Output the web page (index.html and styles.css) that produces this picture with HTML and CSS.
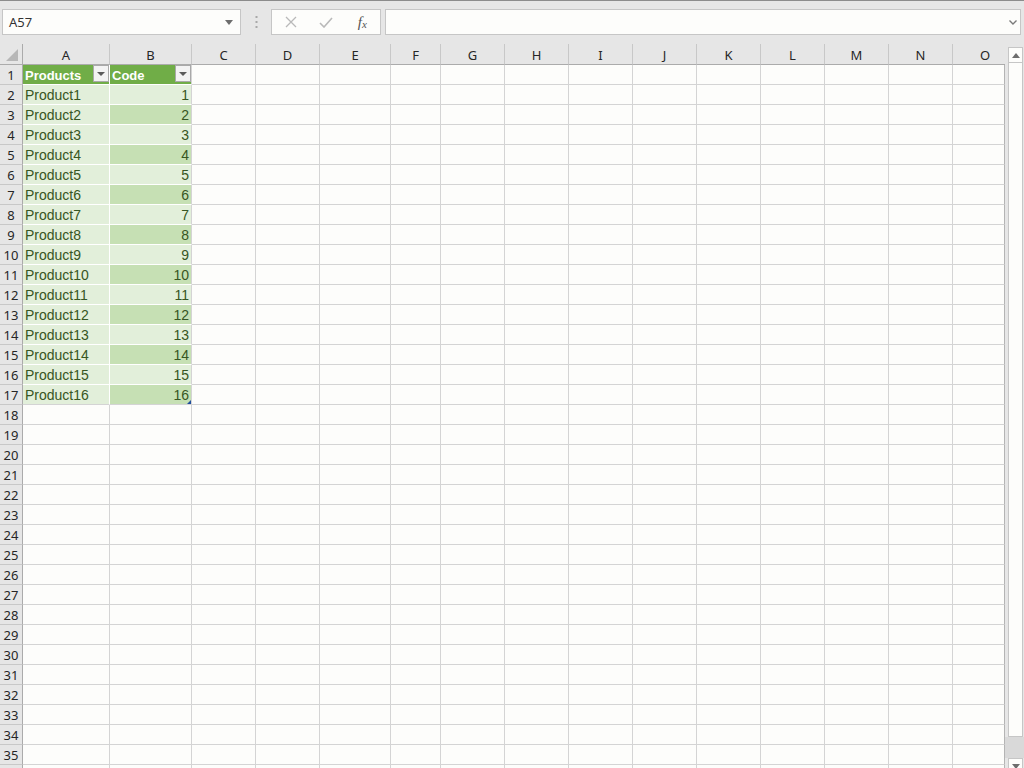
FILE: index.html
```html
<!DOCTYPE html>
<html>
<head>
  <title>Book1 - Excel</title>
  <link rel="stylesheet" href="styles.css">
</head>
<body>

  <!-- Formula bar -->
  <div class="formula-bar">
    <div class="name-box">
      <span>A57</span>
      <svg class="name-arrow" width="8" height="5" viewBox="0 0 8 5"><path d="M0 0 L8 0 L4 5 Z" fill="#6d6d6d"/></svg>
    </div>
    <div class="dots">
      <svg width="3" height="13" viewBox="0 0 3 13">
        <rect x="0.5" y="0" width="2" height="2" fill="#a8a8a8"/>
        <rect x="0.5" y="5" width="2" height="2" fill="#a8a8a8"/>
        <rect x="0.5" y="10" width="2" height="2" fill="#a8a8a8"/>
      </svg>
    </div>
    <div class="fx-buttons">
      <span class="fx-btn">
        <svg width="12" height="12" viewBox="0 0 12 12"><path d="M1 1 L11 11 M11 1 L1 11" stroke="#b9b9b9" stroke-width="1.3" fill="none"/></svg>
      </span>
      <span class="fx-btn">
        <svg width="14" height="11" viewBox="0 0 14 11"><path d="M1 6 L5 10 L13 1" stroke="#b9b9b9" stroke-width="1.6" fill="none"/></svg>
      </span>
      <span class="fx-btn fx-label"><i>f</i><span class="fx-x">x</span></span>
    </div>
    <div class="formula-input">
      <svg width="8" height="5" viewBox="0 0 8 5"><path d="M0.5 0.5 L4 4 L7.5 0.5" stroke="#7a7a7a" stroke-width="1.4" fill="none"/></svg>
    </div>
  </div>

  <!-- Sheet -->
  <div class="sheet">
    <div class="grid" id="grid"></div>
    <div class="vscroll">
      <div class="vs-btn">
        <svg width="8" height="5" viewBox="0 0 8 5"><path d="M0 5 L8 5 L4 0 Z" fill="#6d6d6d"/></svg>
      </div>
      <div class="vs-thumb"></div>
      <div class="vs-track"></div>
      <div class="vs-btn">
        <svg width="8" height="5" viewBox="0 0 8 5"><path d="M0 0 L8 0 L4 5 Z" fill="#6d6d6d"/></svg>
      </div>
    </div>
  </div>

  <script>
    const cols = "ABCDEFGHIJKLMNO".split("");
    const grid = document.getElementById("grid");
    const filterBtn = '<span class="filter"><svg width="8" height="4" viewBox="0 0 8 4"><path d="M0 0 L8 0 L4 4 Z" fill="#5b5b5b"/></svg></span>';

    function addCell(cls, html) {
      const div = document.createElement("div");
      div.className = cls;
      div.innerHTML = html || "";
      grid.appendChild(div);
    }

    // column headers
    addCell("corner", '<svg width="12" height="12" viewBox="0 0 12 12"><path d="M12 0 L12 12 L0 12 Z" fill="#b7b7b7"/></svg>');
    cols.forEach(function (c, i) {
      addCell("col-head" + (i === cols.length - 1 ? " last" : ""), c);
    });

    // row 36 only peeks in at the bottom edge, its number is off screen
    for (let r = 1; r <= 36; r++) {
      addCell("row-head", r < 36 ? r : "");
      cols.forEach(function (c, i) {
        let cls = "cell";
        let html = "";
        if (r === 1 && c === "A") {
          cls += " tbl-head";
          html = "<span>Products</span>" + filterBtn;
        } else if (r === 1 && c === "B") {
          cls += " tbl-head tbl-right";
          html = "<span>Code</span>" + filterBtn;
        } else if (r <= 17 && c === "A") {
          cls += " tbl-light";
          html = "Product" + (r - 1);
        } else if (r <= 17 && c === "B") {
          cls += (r % 2 === 0 ? " tbl-light" : " tbl-dark") + " num tbl-right";
          html = r - 1;
          if (r === 17) html += '<span class="handle"></span>';
        }
        if (r === 17 && (c === "A" || c === "B")) cls += " tbl-last";
        if (i === cols.length - 1) cls += " last";
        addCell(cls, html);
      });
    }
  </script>

</body>
</html>
```

FILE: styles.css
```css
html, body {
  margin: 0;
  padding: 0;
  height: 768px;
  overflow: hidden;
  background-color: #e6e6e6;
  font-family: "Liberation Sans", Arial, sans-serif;
}

/* Formula bar */
.formula-bar {
  height: 44px;
  box-sizing: border-box;
  border-top: 1px solid #8c8c8c;
  padding: 8px 0 0 2px;
  display: flex;
  align-items: flex-start;
}

.name-box {
  width: 239px;
  height: 26px;
  box-sizing: border-box;
  border: 1px solid #c6c6c6;
  background-color: #fdfdfb;
  display: flex;
  align-items: center;
  justify-content: space-between;
  padding: 0 7px 0 6px;
  font-family: "Noto Sans", sans-serif;
  font-size: 13px;
  color: #333;
}

.dots {
  width: 30px;
  height: 26px;
  display: flex;
  align-items: center;
  justify-content: center;
}

.fx-buttons {
  width: 110px;
  height: 26px;
  box-sizing: border-box;
  border: 1px solid #c6c6c6;
  background-color: #fdfdfb;
  display: flex;
  align-items: center;
  padding-left: 1px;
}

.fx-btn {
  width: 36px;
  display: flex;
  justify-content: center;
  align-items: center;
}

.fx-label {
  font-family: "Liberation Serif", serif;
  font-size: 15px;
  color: #555;
  padding-left: 1px;
}

.fx-label i {
  font-style: italic;
}

.fx-x {
  font-style: italic;
  font-size: 11px;
  margin-top: 3px;
}

.formula-input {
  width: 636px;
  height: 26px;
  margin-left: 4px;
  box-sizing: border-box;
  border: 1px solid #c6c6c6;
  background-color: #fdfdfb;
  display: flex;
  align-items: center;
  justify-content: flex-end;
  padding-right: 3px;
}

/* Sheet */
.sheet {
  display: flex;
  height: 724px;
  overflow: hidden;
}

.grid {
  display: grid;
  grid-template-columns: 23px 87px 82px 64px 64px 71px 50px 64px 64px 64px 64px 64px 64px 64px 64px 52px;
  grid-template-rows: 21px;
  grid-auto-rows: 20px;
  width: 1005px;
  flex: none;
}

.grid > div {
  box-sizing: border-box;
  overflow: hidden;
  white-space: nowrap;
}

.corner {
  border-right: 1px solid #ababab;
  border-bottom: 1px solid #ababab;
  display: flex;
  align-items: flex-end;
  justify-content: flex-end;
  padding: 0 4px 3px 0;
}

.col-head {
  border-right: 1px solid #c8c8c8;
  border-bottom: 1px solid #ababab;
  text-align: center;
  font-family: "Noto Sans", sans-serif;
  font-size: 13px;
  line-height: 20px;
  color: #262626;
  padding-top: 1px;
}

.col-head.last {
  border-right: none;
  padding-left: 12px;
}

.row-head {
  border-right: 1px solid #ababab;
  border-bottom: 1px solid #c8c8c8;
  text-align: center;
  font-family: "Noto Sans", sans-serif;
  font-size: 13px;
  line-height: 19px;
  padding-top: 1px;
  color: #262626;
}

.cell {
  border-right: 1px solid #d4d4d4;
  border-bottom: 1px solid #d4d4d4;
  background-color: #fdfdfb;
  font-size: 14px;
  line-height: 19px;
  padding: 1px 2px 0 2px;
  color: #375623;
}

.cell.last {
  border-right-color: #b4b4b4;
}

/* Table */
.tbl-head {
  background-color: #70ad47;
  color: #ffffff;
  font-weight: bold;
  font-size: 13px;
  border-color: #ffffff;
  display: flex;
  justify-content: space-between;
  align-items: flex-start;
  padding-top: 0;
  padding-right: 0;
  line-height: 21px;
}

.tbl-light {
  background-color: #e2efda;
  border-color: #ffffff;
}

.tbl-dark {
  background-color: #c6e0b4;
  border-color: #ffffff;
}

.tbl-right {
  border-right-color: #d4d4d4;
}

.tbl-last {
  border-bottom-color: #d4d4d4;
}

.num {
  text-align: right;
  position: relative;
}

.filter {
  width: 16px;
  height: 17px;
  box-sizing: border-box;
  border: 1px solid #a9a9a9;
  background-color: #f3f3f3;
  display: flex;
  align-items: center;
  justify-content: center;
}

.handle {
  position: absolute;
  right: 0;
  bottom: 0;
  width: 0;
  height: 0;
  border-left: 4px solid transparent;
  border-bottom: 4px solid #1f4e9c;
}

/* Scrollbar */
.vscroll {
  width: 19px;
  flex: none;
  display: flex;
  flex-direction: column;
  padding-top: 3px;
}

.vs-btn {
  height: 16px;
  flex: none;
  margin: 0 1px 0 3px;
  box-sizing: border-box;
  border: 1px solid #c6c6c6;
  background-color: #fdfdfb;
  display: flex;
  align-items: center;
  justify-content: center;
}

.vs-thumb {
  height: 674px;
  flex: none;
  margin: 0 1px 0 3px;
  box-sizing: border-box;
  border: 1px solid #c6c6c6;
  border-top: none;
  background-color: #fdfdfb;
}

.vs-track {
  height: 21px;
  flex: none;
  background-color: #d9d9d9;
}
```
